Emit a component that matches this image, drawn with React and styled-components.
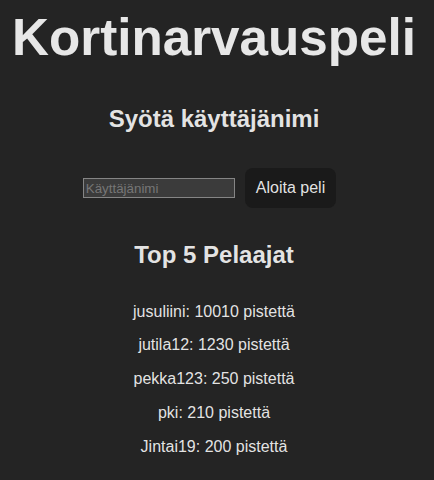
import styled, { createGlobalStyle } from 'styled-components';

const GlobalStyle = createGlobalStyle`
  body {
    margin: 0;
    background: #242424;
    color: rgba(255, 255, 255, 0.89);
    font-family: 'Liberation Sans', Arial, sans-serif;
  }
`;

const Page = styled.div`
  display: flex;
  flex-direction: column;
  align-items: center;
  padding: 9px 6px 0 0;
  text-align: center;
`;

const Title = styled.h1`
  margin: 0;
  font-size: 51.2px;
  line-height: 58px;
  font-weight: bold;
  white-space: nowrap;
`;

const Heading = styled.h2`
  margin: ${(props) => props.$top}px 0 0;
  font-size: 24px;
  line-height: 28px;
  font-weight: bold;
`;

const StartRow = styled.div`
  display: flex;
  align-items: center;
  gap: 10px;
  margin-top: 35px;
  padding-right: 9px;
`;

const NameInput = styled.input`
  box-sizing: border-box;
  width: 152px;
  height: 20px;
  padding: 1px 2px;
  border: 1px solid #858585;
  border-radius: 0;
  background: #3b3b3b;
  color: #e8e8e8;
  font-family: 'Liberation Sans', Arial, sans-serif;
  font-size: 13.33px;

  &::placeholder {
    color: #767676;
  }
`;

const StartButton = styled.button`
  padding: 10px;
  border: 1px solid transparent;
  border-radius: 8px;
  background: #1a1a1a;
  color: rgba(255, 255, 255, 0.89);
  font-family: 'Liberation Sans', Arial, sans-serif;
  font-size: 16px;
  line-height: 18px;
  cursor: pointer;
`;

const ScoreList = styled.div`
  display: flex;
  flex-direction: column;
  align-items: center;
  gap: 15.8px;
  margin-top: 33.5px;
`;

const ScoreLine = styled.p`
  margin: 0;
  font-size: 16px;
  line-height: 18px;
`;

const players = [
  { name: 'jusuliini', points: 10010 },
  { name: 'jutila12', points: 1230 },
  { name: 'pekka123', points: 250 },
  { name: 'pki', points: 210 },
  { name: 'Jintai19', points: 200 },
];

export default function App() {
  return (
    <>
      <GlobalStyle />
      <Page>
        <Title>Kortinarvauspeli</Title>
        <Heading $top={38}>Syötä käyttäjänimi</Heading>
        <StartRow>
          <NameInput type="text" placeholder="Käyttäjänimi" />
          <StartButton>Aloita peli</StartButton>
        </StartRow>
        <Heading $top={33}>Top 5 Pelaajat</Heading>
        <ScoreList>
          {players.map((p) => (
            <ScoreLine key={p.name}>
              {p.name}: {p.points} pistettä
            </ScoreLine>
          ))}
        </ScoreList>
      </Page>
    </>
  );
}
